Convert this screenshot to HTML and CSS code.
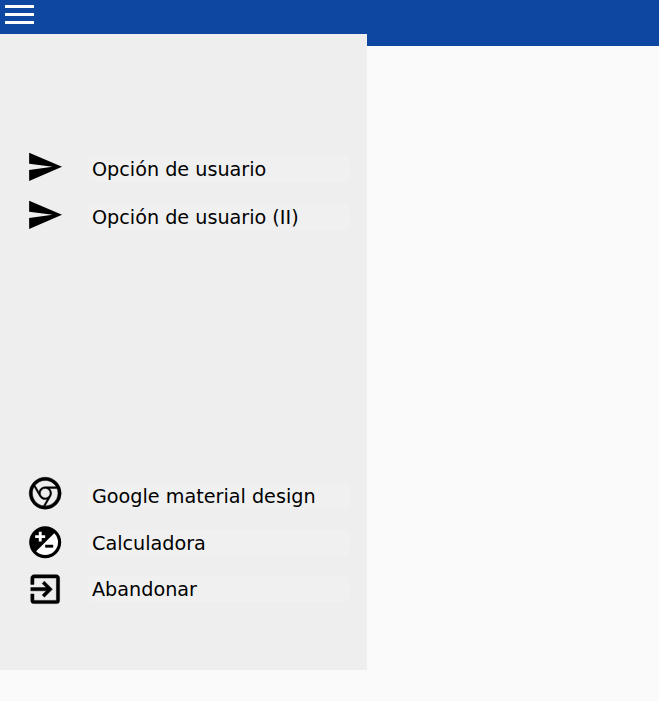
FILE: index.html
```html
<!DOCTYPE html>
<html lang="es">
<head>
    <meta charset="UTF-8" />
    <title>Menú</title>
    <link rel="stylesheet" href="styles.css">
</head>
<body>
    <header class="topbar">
        <div class="menu-btn">
            <span></span>
            <span></span>
            <span></span>
        </div>
    </header>

    <!-- Menu lateral -->
    <nav class="drawer">
        <ul class="menu-group menu-user">
            <li class="menu-item">
                <svg class="menu-icon icon-send" viewBox="0 0 24 24"><path d="M2.01 21L23 12 2.01 3 2 10l15 2-15 2z"/></svg>
                <span class="menu-label">Opción de usuario</span>
            </li>
            <li class="menu-item">
                <svg class="menu-icon icon-send" viewBox="0 0 24 24"><path d="M2.01 21L23 12 2.01 3 2 10l15 2-15 2z"/></svg>
                <span class="menu-label">Opción de usuario (II)</span>
            </li>
        </ul>
        <ul class="menu-group menu-app">
            <li class="menu-item">
                <svg class="menu-icon icon-bold" viewBox="0 0 24 24"><path d="M12,20L15.46,14H15.45C15.79,13.4 16,12.73 16,12C16,10.8 15.46,9.73 14.62,9H19.41C19.79,9.93 20,10.94 20,12A8,8 0 0,1 12,20M4,12C4,10.54 4.39,9.18 5.07,8L8.54,14H8.55C9.24,15.19 10.5,16 12,16C12.45,16 12.88,15.91 13.29,15.77L10.89,19.91C7,19.37 4,16.04 4,12M15,12A3,3 0 0,1 12,15A3,3 0 0,1 9,12A3,3 0 0,1 12,9A3,3 0 0,1 15,12M12,4C14.96,4 17.54,5.61 18.92,8H12C10.06,8 8.44,9.38 8.08,11.21L5.7,7.08C7.16,5.21 9.44,4 12,4M12,2A10,10 0 0,0 2,12A10,10 0 0,0 12,22A10,10 0 0,0 22,12A10,10 0 0,0 12,2Z"/></svg>
                <span class="menu-label">Google material design</span>
            </li>
            <li class="menu-item">
                <svg class="menu-icon" viewBox="0 0 24 24">
                    <circle cx="12" cy="12" r="10"/>
                    <path class="icon-light" d="M17.66 6.34A8 8 0 0 1 6.34 17.66z"/>
                    <path class="icon-light" d="M8 5.5h1.8v2.1H12v1.8H9.8v2.1H8V9.4H5.7V7.6H8z"/>
                    <path d="M12 13.6h5v1.8h-5z"/>
                </svg>
                <span class="menu-label">Calculadora</span>
            </li>
            <li class="menu-item">
                <svg class="menu-icon icon-bold" viewBox="0 0 24 24"><path d="M19,3H5C3.89,3 3,3.89 3,5V9H5V5H19V19H5V15H3V19A2,2 0 0,0 5,21H19A2,2 0 0,0 21,19V5C21,3.89 20.1,3 19,3M10.08,15.58L11.5,17L16.5,12L11.5,7L10.08,8.41L12.67,11H3V13H12.67L10.08,15.58Z"/></svg>
                <span class="menu-label">Abandonar</span>
            </li>
        </ul>
    </nav>
</body>
</html>
```
FILE: styles.css
```css
html, body {
    height: 100%;
}

body {
    margin: 0;
    background: #fafafa;
    color: #000;
    font-family: "DejaVu Sans", Verdana, sans-serif;
}

.topbar {
    height: 46px;
    background: #0d47a1;
}

.menu-btn {
    display: flex;
    flex-direction: column;
    gap: 5px;
    width: 29px;
    padding: 5px;
}

.menu-btn span {
    height: 3px;
    background: #fff;
}

/* le drawer passe par-dessus la barre */
.drawer {
    position: absolute;
    top: 34px;
    left: 0;
    width: 367px;
    height: 636px;
    background: #eee;
}

.menu-group {
    list-style: none;
    margin: 0;
    padding: 0 17px 0 26px;
}

.menu-user {
    padding-top: 111px;
}

.menu-app {
    padding-top: 232px;
}

.menu-item {
    display: flex;
    align-items: center;
    height: 48px;
}

.menu-app .menu-item {
    height: 46.5px;
}

.menu-icon {
    flex: none;
    width: 38.4px;
    height: 38.4px;
    margin-top: -5px;
}

.icon-send {
    width: 37.6px;
    height: 37.6px;
    margin: -5px 1.1px 0 -0.3px;
}

.menu-app .menu-icon {
    margin-top: -1px;
}

.menu-app .menu-item:first-child .menu-icon {
    margin-top: -5.5px;
}

.icon-light {
    fill: #fff;
}

.icon-bold {
    stroke: #000;
    stroke-width: 0.3;
}

.menu-label {
    flex: 1;
    margin-left: 23.6px;
    padding-left: 4px;
    height: 26px;
    line-height: 28px;
    font-size: 19.2px;
    background: #f0f0f0;
    border-radius: 6px;
}
```
